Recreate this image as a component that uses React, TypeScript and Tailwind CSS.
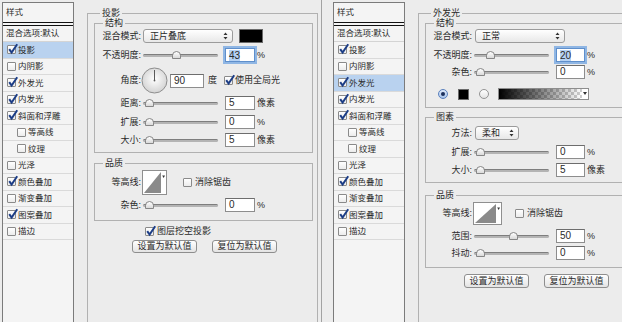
import React from 'react';

type Item = { t: string; on: boolean; sub?: boolean };

const items: Item[] = [
  { t: '投影', on: true },
  { t: '内阴影', on: false },
  { t: '外发光', on: true },
  { t: '内发光', on: true },
  { t: '斜面和浮雕', on: true },
  { t: '等高线', on: false, sub: true },
  { t: '纹理', on: false, sub: true },
  { t: '光泽', on: false },
  { t: '颜色叠加', on: true },
  { t: '渐变叠加', on: false },
  { t: '图案叠加', on: true },
  { t: '描边', on: false },
];

function Check({ on, className = '' }: { on?: boolean; className?: string }) {
  return (
    <span className={`relative inline-block w-[9px] h-[9px] shrink-0 border border-[#8a8a8a] bg-gradient-to-b from-white to-[#ececec] rounded-[1px] ${className}`}>
      {on && (
        <svg className="absolute -left-[1px] -top-[3px]" width="12" height="12" viewBox="0 0 12 12">
          <path d="M2.2 6.2 L4.6 9.6 L10.2 1.2" fill="none" stroke="#1c3d86" strokeWidth="2" />
        </svg>
      )}
    </span>
  );
}

function StyleList({ sel }: { sel: number }) {
  return (
    <div className="w-[72px] h-[340px] shrink-0 border border-[#7b7b7b] bg-[#f4f4f4] text-[8.5px] leading-none text-[#2a2a2a]">
      <div className="h-[19px] flex items-center pl-[3px]">样式</div>
      <div className="h-[4px] border-y border-[#111]" />
      <div className="h-[16px] flex items-center pl-[3px] border-b border-[#d4d4d4]">混合选项:默认</div>
      {items.map((it, i) => (
        <div
          key={it.t}
          className={`h-[16.5px] flex items-center gap-[2px] border-b border-[#dadada] ${it.sub ? 'pl-[14px]' : 'pl-[4px]'} ${i === sel ? 'bg-[#b9d2ef]' : ''}`}
        >
          <Check on={it.on} />
          <span>{it.t}</span>
        </div>
      ))}
    </div>
  );
}

function Box({ title, className = '', legend = 'ml-[8px]', children }: { title: string; className?: string; legend?: string; children?: React.ReactNode }) {
  return (
    <fieldset className={`border border-[#b1b1b1] ${className}`}>
      <legend className={`px-[2px] text-[9px] leading-[10px] ${legend}`}>{title}</legend>
      {children}
    </fieldset>
  );
}

function Row({ label, className = '', children }: { label: string; className?: string; children?: React.ReactNode }) {
  return (
    <div className={`flex items-center h-[14px] ${className}`}>
      <span className="w-[46px] shrink-0 text-right">{label}</span>
      {children}
    </div>
  );
}

function Slider({ at, className = '' }: { at: number; className?: string }) {
  return (
    <div className={`relative w-[75px] h-[10px] shrink-0 ${className}`}>
      <div className="absolute inset-x-0 top-[4px] h-[3px] rounded-full bg-[#b4b4b4] border-t border-[#7e7e7e]" />
      <div
        className="absolute top-[1px] w-[9px] h-[8px] rounded-t-full rounded-b-[2px] border border-[#868686] bg-gradient-to-b from-white to-[#d9d9d9]"
        style={{ left: at }}
      />
    </div>
  );
}

function Num({ v, focus, className = 'w-[30px]' }: { v: string; focus?: boolean; className?: string }) {
  return (
    <div
      className={`h-[14px] shrink-0 flex items-center pl-[3px] bg-white text-[10px] border ${focus ? 'border-[#5f8fcb] shadow-[0_0_0_2px_#8fb6e4]' : 'border-[#8d8d8d] border-t-[#6d6d6d]'} ${className}`}
    >
      {focus ? <span className="bg-[#b5d2f4] leading-[11px]">{v}</span> : v}
    </div>
  );
}

function Unit({ t }: { t: string }) {
  return <span className="ml-[2px]">{t}</span>;
}

function Select({ v, className = '' }: { v: string; className?: string }) {
  return (
    <div
      className={`h-[14px] shrink-0 flex items-center justify-between pl-[6px] pr-[4px] rounded-[3px] border border-[#9b9b9b] bg-gradient-to-b from-white to-[#e8e8e8] ${className}`}
    >
      <span>{v}</span>
      <svg width="5" height="8" viewBox="0 0 5 8">
        <path d="M2.5 0.5 L4.5 3 H0.5 Z M2.5 7.5 L4.5 5 H0.5 Z" fill="#333" />
      </svg>
    </div>
  );
}

function Dial() {
  return (
    <svg width="27" height="27" viewBox="0 0 27 27" className="shrink-0">
      <defs>
        <radialGradient id="dialg" cx="50%" cy="45%" r="60%">
          <stop offset="0" stopColor="#ffffff" />
          <stop offset="1" stopColor="#cfcfcf" />
        </radialGradient>
      </defs>
      <circle cx="13.5" cy="13.5" r="12.5" fill="url(#dialg)" stroke="#8d8d8d" />
      <line x1="13.5" y1="13.5" x2="13.5" y2="3" stroke="#5a5a5a" strokeWidth="1" />
      <circle cx="13.5" cy="13.5" r="0.9" fill="#5a5a5a" />
    </svg>
  );
}

function Contour({ w, h, className = '' }: { w: number; h: number; className?: string }) {
  return (
    <svg width={w} height={h} viewBox={`0 0 ${w} ${h}`} className={`shrink-0 ${className}`}>
      <rect x="0.5" y="0.5" width={w - 1} height={h - 1} fill="#fff" stroke="#8f8f8f" />
      <polygon points={`2,${h - 2} ${w - 6},${h - 2} ${w - 6},2`} fill="#8a8a8a" />
      <path d={`M${w - 4.8} 5.5 l1.4 2.4 l1.4 -2.4 z`} fill="#333" />
    </svg>
  );
}

function Radio({ on, className = '' }: { on?: boolean; className?: string }) {
  return (
    <span
      className={`w-[10px] h-[10px] shrink-0 rounded-full flex items-center justify-center border ${on ? 'border-[#5a80bd] bg-gradient-to-b from-[#dfeafa] to-[#a7c3ea]' : 'border-[#949494] bg-gradient-to-b from-white to-[#e3e3e3]'} ${className}`}
    >
      {on && <span className="w-[4px] h-[4px] rounded-full bg-[#1b2f5c]" />}
    </span>
  );
}

function Btn({ t, className = 'h-[13px]' }: { t: string; className?: string }) {
  return (
    <div
      className={`w-[65px] flex items-center justify-center rounded-[3px] border border-[#8e8e8e] bg-gradient-to-b from-white to-[#e4e4e4] ${className}`}
    >
      {t}
    </div>
  );
}

function DropShadow() {
  return (
    <Box title="投影" legend="ml-[6px]" className="ml-[13px] mt-[6px] w-[231px] h-[400px] shrink-0 pl-[6px] pr-[4px]">
      <Box title="结构" className="pt-[1px] pb-[5px]">
        <Row label="混合模式:">
          <Select v="正片叠底" className="ml-[2px] w-[90px]" />
          <div className="ml-[6px] w-[24px] h-[14px] bg-black border border-[#6a6a6a]" />
        </Row>
        <Row label="不透明度:" className="mt-[5px]">
          <Slider at={29} className="ml-[2px]" />
          <Num v="43" focus className="ml-[7px] w-[30px]" />
          <Unit t="%" />
        </Row>
        <Row label="角度:" className="mt-[5px] h-[27px]">
          <Dial />
          <Num v="90" className="ml-[2px] w-[34px]" />
          <span className="ml-[4px]">度</span>
          <Check on className="ml-[7px]" />
          <span className="ml-[2px]">使用全局光</span>
        </Row>
        <Row label="距离:" className="mt-[2px]">
          <Slider at={2} className="ml-[2px]" />
          <Num v="5" className="ml-[7px] w-[30px]" />
          <Unit t="像素" />
        </Row>
        <Row label="扩展:" className="mt-[5px]">
          <Slider at={2} className="ml-[2px]" />
          <Num v="0" className="ml-[7px] w-[30px]" />
          <Unit t="%" />
        </Row>
        <Row label="大小:" className="mt-[4px]">
          <Slider at={2} className="ml-[2px]" />
          <Num v="5" className="ml-[7px] w-[30px]" />
          <Unit t="像素" />
        </Row>
      </Box>
      <Box title="品质" className="mt-[5px] pt-[2px] pb-[8px]">
        <Row label="等高线:" className="h-[25px]">
          <Contour w={25} h={25} className="ml-[1px]" />
          <Check className="ml-[16px]" />
          <span className="ml-[3px]">消除锯齿</span>
        </Row>
        <Row label="杂色:" className="mt-[3px]">
          <Slider at={2} className="ml-[2px]" />
          <Num v="0" className="ml-[7px] w-[30px]" />
          <Unit t="%" />
        </Row>
      </Box>
      <div className="mt-[4px] h-[12px] flex items-center pl-[51px]">
        <Check on />
        <span className="ml-[3px]">图层挖空投影</span>
      </div>
      <div className="mt-[3px] flex gap-[15px] pl-[38px]">
        <Btn t="设置为默认值" />
        <Btn t="复位为默认值" />
      </div>
    </Box>
  );
}

function OuterGlow() {
  return (
    <Box title="外发光" legend="ml-[6px]" className="ml-[13px] mt-[6px] w-[231px] h-[400px] shrink-0 pl-[6px] pr-[4px]">
      <Box title="结构" className="pt-[1px] pb-[7px]">
        <Row label="混合模式:">
          <Select v="正常" className="ml-[3px] w-[90px]" />
        </Row>
        <Row label="不透明度:" className="mt-[5px]">
          <Slider at={12} className="ml-[2px]" />
          <Num v="20" focus className="ml-[7px] w-[29px]" />
          <Unit t="%" />
        </Row>
        <Row label="杂色:" className="mt-[3px]">
          <Slider at={2} className="ml-[2px]" />
          <Num v="0" className="ml-[7px] w-[29px]" />
          <Unit t="%" />
        </Row>
        <div className="mt-[9px] h-[12px] flex items-center pl-[12px]">
          <Radio on />
          <div className="ml-[10px] w-[11px] h-[11px] bg-black border border-[#6a6a6a]" />
          <Radio className="ml-[10px]" />
          <div className="ml-[9px] flex h-[12px] border border-[#8d8d8d]">
            <div className="w-[83px] h-full bg-[repeating-conic-gradient(#cfcfcf_0_25%,#ffffff_0_50%)] bg-[length:6px_6px]">
              <div className="w-full h-full bg-gradient-to-r from-black to-transparent" />
            </div>
            <div className="w-[6px] h-full bg-white flex items-start justify-center pt-[3px]">
              <svg width="4" height="3" viewBox="0 0 4 3">
                <path d="M0 0 H4 L2 3 Z" fill="#333" />
              </svg>
            </div>
          </div>
        </div>
      </Box>
      <Box title="图素" className="mt-[4px] pt-[4px] pb-[5px]">
        <Row label="方法:">
          <Select v="柔和" className="ml-[3px] w-[44px]" />
        </Row>
        <Row label="扩展:" className="mt-[5px]">
          <Slider at={2} className="ml-[2px]" />
          <Num v="0" className="ml-[7px] w-[29px]" />
          <Unit t="%" />
        </Row>
        <Row label="大小:" className="mt-[4px]">
          <Slider at={2} className="ml-[2px]" />
          <Num v="5" className="ml-[7px] w-[29px]" />
          <Unit t="像素" />
        </Row>
      </Box>
      <Box title="品质" className="mt-[7px] pt-[2px] pb-[7px]">
        <Row label="等高线:" className="h-[23px]">
          <Contour w={29} h={23} className="ml-[1px]" />
          <Check className="ml-[13px]" />
          <span className="ml-[3px]">消除锯齿</span>
        </Row>
        <Row label="范围:" className="mt-[4px]">
          <Slider at={35} className="ml-[2px]" />
          <Num v="50" className="ml-[7px] w-[29px]" />
          <Unit t="%" />
        </Row>
        <Row label="抖动:" className="mt-[3px]">
          <Slider at={2} className="ml-[2px]" />
          <Num v="0" className="ml-[7px] w-[29px]" />
          <Unit t="%" />
        </Row>
      </Box>
      <div className="mt-[6px] flex gap-[15px] pl-[39px]">
        <Btn t="设置为默认值" className="h-[14px]" />
        <Btn t="复位为默认值" className="h-[14px]" />
      </div>
    </Box>
  );
}

export default function App() {
  return (
    <div className="flex w-[622px] h-[322px] overflow-hidden bg-[#ececec] text-[9px] leading-none text-[#2a2a2a] [font-family:'Liberation_Sans','Noto_Sans_CJK_SC',sans-serif]">
      <div className="w-[321px] shrink-0 overflow-hidden">
        <div className="flex pl-[2px] pt-[2px]">
          <StyleList sel={0} />
          <DropShadow />
        </div>
      </div>
      <div className="w-px shrink-0 bg-[#a2a2a2]" />
      <div className="w-[300px] shrink-0 overflow-hidden">
        <div className="flex w-[400px] pl-[11px] pt-[2px]">
          <StyleList sel={2} />
          <OuterGlow />
        </div>
      </div>
    </div>
  );
}
